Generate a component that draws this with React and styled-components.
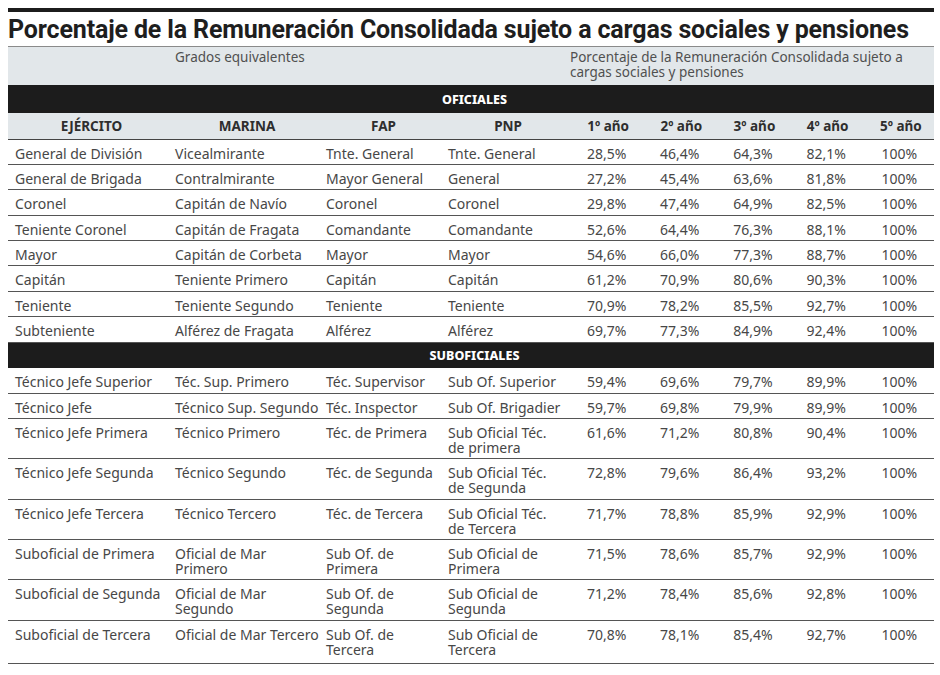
import React from "react";
import styled, { createGlobalStyle } from "styled-components";

const Global = createGlobalStyle`
  html, body { margin: 0; padding: 0; background: #fff; }
  body { padding: 8px 6px 8px 8px; font-family: "Noto Sans", "Open Sans", sans-serif; }
`;

const Wrap = styled.div`
  width: 926px;
  border-top: 4px solid #1c1c1c;
`;

const Title = styled.h1`
  margin: 0;
  height: 35px;
  padding-top: 3px;
  box-sizing: border-box;
  border-bottom: 1px solid #8a8a8a;
  font-family: "Roboto", "Liberation Sans", sans-serif;
  font-weight: 700;
  font-size: 25px;
  line-height: 30px;
  letter-spacing: -0.15px;
  color: #1e1e1e;
  white-space: nowrap;
`;

const Table = styled.table`
  width: 926px;
  border-collapse: collapse;
  table-layout: fixed;
  font-size: 14px;
  color: #474747;
`;

const TopHead = styled.td`
  background: #e2e7ea;
  height: 38px;
  box-sizing: border-box;
  padding: 3px 0 0 ${(p) => p.$pl ?? 7}px;
  vertical-align: top;
  line-height: 15px;
  color: #505050;
  font-size: 13.5px;
  white-space: pre;
`;

const Band = styled.td`
  background: #1c1c1c;
  color: #fff;
  text-align: center;
  font-weight: 800;
  font-size: 12.5px;
  height: ${(p) => p.$h}px;
  padding: 0 0 0 7px;
  box-sizing: border-box;
  vertical-align: middle;
`;

const HeadCell = styled.th`
  background: #e2e7ea;
  height: 26px;
  padding: 0 0 0 7px;
  box-sizing: border-box;
  text-align: center;
  font-weight: 700;
  font-size: 13.5px;
  color: #2e2e2e;
  border-bottom: 1px solid #444;
`;

const Row = styled.tr`
  border-bottom: 1px solid #555;
`;

const Cell = styled.td`
  padding: 6px 0 ${(p) => (p.$last ? 6 : 3.4)}px ${(p) => (p.$num ? 4 : 7)}px;
  line-height: 15px;
  vertical-align: top;
  text-align: ${(p) => (p.$num ? "center" : "left")};
  white-space: pre;
  overflow: visible;
`;

const oficiales = [
  ["General de División", "Vicealmirante", "Tnte. General", "Tnte. General", "28,5%", "46,4%", "64,3%", "82,1%"],
  ["General de Brigada", "Contralmirante", "Mayor General", "General", "27,2%", "45,4%", "63,6%", "81,8%"],
  ["Coronel", "Capitán de Navío", "Coronel", "Coronel", "29,8%", "47,4%", "64,9%", "82,5%"],
  ["Teniente Coronel", "Capitán de Fragata", "Comandante", "Comandante", "52,6%", "64,4%", "76,3%", "88,1%"],
  ["Mayor", "Capitán de Corbeta", "Mayor", "Mayor", "54,6%", "66,0%", "77,3%", "88,7%"],
  ["Capitán", "Teniente Primero", "Capitán", "Capitán", "61,2%", "70,9%", "80,6%", "90,3%"],
  ["Teniente", "Teniente Segundo", "Teniente", "Teniente", "70,9%", "78,2%", "85,5%", "92,7%"],
  ["Subteniente", "Alférez de Fragata", "Alférez", "Alférez", "69,7%", "77,3%", "84,9%", "92,4%"],
];

const suboficiales = [
  ["Técnico Jefe Superior", "Téc. Sup. Primero", "Téc. Supervisor", "Sub Of. Superior", "59,4%", "69,6%", "79,7%", "89,9%"],
  ["Técnico Jefe", "Técnico Sup. Segundo", "Téc. Inspector", "Sub Of. Brigadier", "59,7%", "69,8%", "79,9%", "89,9%"],
  ["Técnico Jefe Primera", "Técnico Primero", "Téc. de Primera", "Sub Oficial Téc.\nde primera", "61,6%", "71,2%", "80,8%", "90,4%"],
  ["Técnico Jefe Segunda", "Técnico Segundo", "Téc. de Segunda", "Sub Oficial Téc.\nde Segunda", "72,8%", "79,6%", "86,4%", "93,2%"],
  ["Técnico Jefe Tercera", "Técnico Tercero", "Téc. de Tercera", "Sub Oficial Téc.\nde Tercera", "71,7%", "78,8%", "85,9%", "92,9%"],
  ["Suboficial de Primera", "Oficial de Mar\nPrimero", "Sub Of. de\nPrimera", "Sub Oficial de\nPrimera", "71,5%", "78,6%", "85,7%", "92,9%"],
  ["Suboficial de Segunda", "Oficial de Mar\nSegundo", "Sub Of. de\nSegunda", "Sub Oficial de\nSegunda", "71,2%", "78,4%", "85,6%", "92,8%"],
  ["Suboficial de Tercera", "Oficial de Mar Tercero", "Sub Of. de\nTercera", "Sub Oficial de\nTercera", "70,8%", "78,1%", "85,4%", "92,7%"],
];

const widths = [160, 151, 122, 127, 73.2, 73.2, 73.2, 73.2, 73.2];
const heads = ["EJÉRCITO", "MARINA", "FAP", "PNP", "1º año", "2º año", "3º año", "4º año", "5º año"];

const DataRow = ({ r, last }) => (
  <Row>
    {r.slice(0, 4).map((t, i) => (
      <Cell key={i} $last={last}>{t}</Cell>
    ))}
    {r.slice(4).map((t, i) => (
      <Cell key={"n" + i} $num $last={last}>
        {t}
      </Cell>
    ))}
    <Cell $num $last={last}>100%</Cell>
  </Row>
);

export default function App() {
  return (
    <>
      <Global />
      <Wrap>
        <Title>Porcentaje de la Remuneración Consolidada sujeto a cargas sociales y pensiones</Title>
        <Table>
          <colgroup>
            {widths.map((w, i) => (
              <col key={i} style={{ width: w }} />
            ))}
          </colgroup>
          <tbody>
            <tr>
              <TopHead />
              <TopHead colSpan={3}>Grados equivalentes</TopHead>
              <TopHead colSpan={5} $pl={2}>
                {"Porcentaje de la Remuneración Consolidada sujeto a\ncargas sociales y pensiones"}
              </TopHead>
            </tr>
            <tr>
              <Band colSpan={9} $h={28}>OFICIALES</Band>
            </tr>
            <tr>
              {heads.map((h) => (
                <HeadCell key={h}>{h}</HeadCell>
              ))}
            </tr>
            {oficiales.map((r) => (
              <DataRow key={r[0]} r={r} />
            ))}
            <tr>
              <Band colSpan={9} $h={26}>SUBOFICIALES</Band>
            </tr>
            {suboficiales.map((r, i) => (
              <DataRow key={r[0]} r={r} last={i === suboficiales.length - 1} />
            ))}
          </tbody>
        </Table>
      </Wrap>
    </>
  );
}
